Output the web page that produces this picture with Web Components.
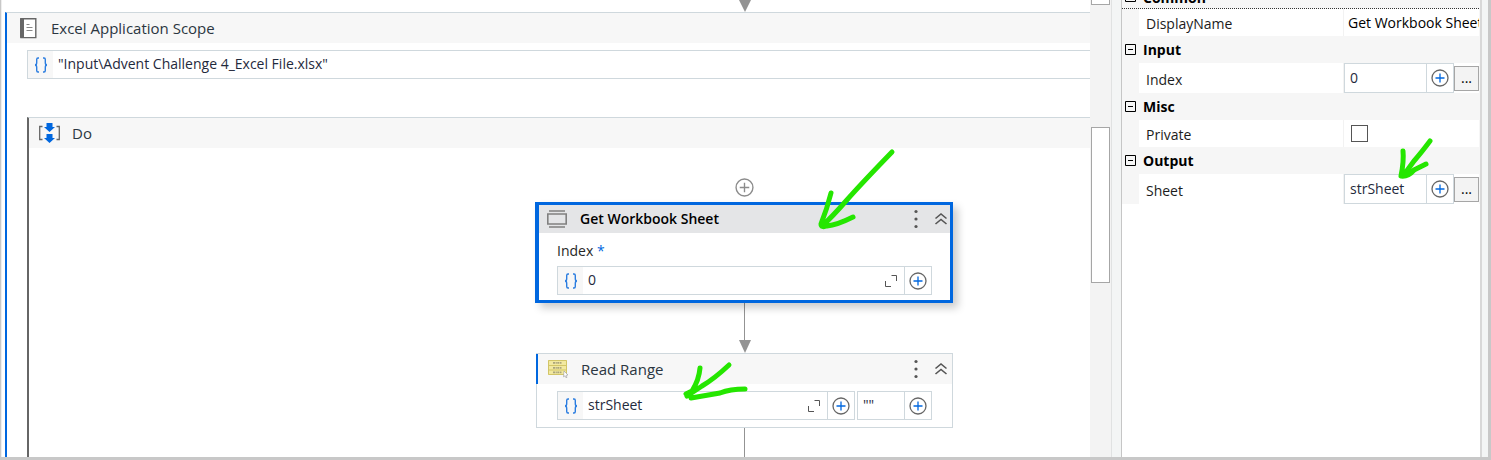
<!DOCTYPE html>
<html lang="en">
<head>
<meta charset="utf-8">
<title>Workflow designer</title>
<style>
html, body { margin: 0; height: 100%; }
body { font: 14px/20px "Open Sans", "Noto Sans", sans-serif; color: #2b3641; background: #fff; }
</style>
</head>
<body>
<studio-window>
  <workflow-canvas slot="canvas">
    <scope-activity heading="Excel Application Scope" path='"Input\Advent Challenge 4_Excel File.xlsx"'>
      <do-sequence>
        <add-activity></add-activity>
        <activity-card selected heading="Get Workbook Sheet">
          <sheet-icon slot="icon"></sheet-icon>
          <field-label>Index</field-label>
          <expression-field name="Index" value="0" braces expand></expression-field>
          <ink-arrow slot="note" kind="long"></ink-arrow>
        </activity-card>
        <flow-link arrow></flow-link>
        <activity-card heading="Read Range">
          <range-icon slot="icon"></range-icon>
          <expression-field name="Sheet name" value="strSheet" braces expand></expression-field>
          <expression-field name="Range" value='""' compact></expression-field>
          <ink-arrow slot="note" kind="wide"></ink-arrow>
        </activity-card>
        <flow-link grow></flow-link>
      </do-sequence>
    </scope-activity>
  </workflow-canvas>
  <scroll-track slot="scroll"></scroll-track>
  <property-panel slot="panel">
    <property-group heading="Common" focused><property-row name="DisplayName" value="Get Workbook Sheet" type="text"></property-row></property-group>
    <property-group heading="Input"><property-row name="Index" value="0" type="expression"></property-row></property-group>
    <property-group heading="Misc"><property-row name="Private" type="check"></property-row></property-group>
    <property-group heading="Output"><property-row name="Sheet" value="strSheet" type="expression"><ink-arrow slot="note" kind="small"></ink-arrow></property-row></property-group>
  </property-panel>
</studio-window>
<script>
const define = (name, render) => customElements.define(name, class extends HTMLElement {
  connectedCallback() {
    if (this.shadowRoot) return;
    this.attachShadow({ mode: 'open' }).innerHTML =
      '<style>*{box-sizing:border-box}svg{display:block}button{font:inherit;margin:0;padding:0;border:0;background:none;color:inherit}input{font:inherit;margin:0}</style>' + render(this);
  }
});
const attr = (el, name) => (el.getAttribute(name) || '').replace(/&/g, '&amp;').replace(/"/g, '&quot;');
const plus = (size, ring, cross) => `<svg width="${size}" height="${size}" viewBox="0 0 18 18" fill="none"><circle cx="9" cy="9" r="8" stroke="${ring}" stroke-width="1.3"/><path d="M4.5 9h9M9 4.5v9" stroke="${cross}" stroke-width="1.3"/></svg>`;

define('studio-window', () => `<style>
  :host{display:grid;box-sizing:border-box;height:100vh;grid-template-columns:minmax(0,1fr) 21px 11px minmax(358px,24%) 8px;
    border:solid #c8c8c8;border-width:0 3px 3px 1px;overflow:hidden}
  ::slotted(*){min-width:0;min-height:0}
  .gap{background:#f3f5f5;border-left:1px solid #e0e2e2;border-right:1px solid #c6c6c6}
  .edge{background:#f3f5f5;border-left:2px solid #d8d8d8}
  </style><slot name="canvas"></slot><slot name="scroll"></slot><div class="gap"></div><slot name="panel"></slot><div class="edge"></div>`);

define('workflow-canvas', () => `<style>
  :host{display:flex;flex-direction:column;overflow:hidden;border-left:1px solid #eee;padding-left:3px}
  .tip{display:grid;grid-template-columns:minmax(0,531fr) 417px minmax(0,137fr);height:12px;flex:none}
  .tip svg{grid-column:2;justify-self:center}
  ::slotted(*){flex:1}
  </style><div class="tip"><svg width="12" height="12" viewBox="0 0 12 12" fill="#939393"><path d="M0 0h12L6 12z"/></svg></div><slot></slot>`);

define('scope-activity', el => `<style>
  :host{display:flex;flex-direction:column;border-left:2px solid #0067df;border-top:1px solid #cfd8dd;min-height:0}
  header{display:flex;align-items:center;gap:14px;height:30px;padding-left:13px;background:#f7f7f7;flex:none;font-size:15px}
  .path{margin:7px 0 38px 20px;flex:none}
  ::slotted(*){margin-left:20px;flex:1}
  </style><header>
  <svg width="17" height="21" viewBox="0 0 17 21"><path d="M1 .8h14.8v18.8H1z" fill="#fff" stroke="#666" stroke-width="1.4"/><path d="M0 1Q0 0 1 0h3v20H1q-1 0-1-1z" fill="#666"/><path d="M6.500 6.500h3M6.500 9.500h6M6.500 12.500h6" stroke="#888"/></svg>
  <span>${attr(el, 'heading')}</span></header>
  <div class="path"><expression-field open name="Workbook path" braces value="${attr(el, 'path')}"></expression-field></div><slot></slot>`);

define('do-sequence', () => `<style>
  :host{display:flex;flex-direction:column;border-left:2px solid #666;border-top:1px solid #cfd8dd;min-height:0}
  header{display:flex;align-items:center;gap:12px;height:30px;padding-left:10px;background:#f7f7f7;flex:none;font-size:15px}
  .body{flex:1;display:grid;grid-template-columns:minmax(0,507fr) 417px minmax(0,137fr);min-height:0;padding-top:30px}
  .col{grid-column:2;display:flex;flex-direction:column}
  </style><header>
  <svg width="21" height="20" viewBox="0 0 21 20"><path d="M3.500 3.500H.700V16.500h2.800M17.500 3.500h2.800V16.500h-2.800" fill="none" stroke="#666" stroke-width="1.300"/><path d="M7.500 0h6v4h2.500l-5.500 5L5 4h2.500zM7.500 11h6v4h2.500l-5.500 5L5 15h2.500z" fill="#0067df"/></svg>
  <span>Do</span></header><div class="body"><div class="col"><slot></slot></div></div>`);

define('add-activity', () => `<style>:host{display:flex;justify-content:center;padding-bottom:5px}button{width:20px}</style>
  <button aria-label="Add activity">${plus(19, '#8c8c8c', '#8c8c8c')}</button>`);

define('flow-link', el => `<style>
  :host{display:flex;flex-direction:column;align-items:center;height:50px;${el.hasAttribute('grow') ? 'flex:1;' : ''}}
  i{width:1px;flex:1;background:#939393}
  </style><i></i>${el.hasAttribute('arrow') ? '<svg width="12" height="13" viewBox="0 0 12 13" fill="#939393"><path d="M0 0h12L6 13z"/></svg>' : ''}`);

define('activity-card', el => {
  const on = el.hasAttribute('selected');
  return `<style>
  :host{display:block;box-sizing:border-box;position:relative;flex:none;background:#fff;
    ${on ? 'border:3px solid #0067df;border-left-width:4px;margin-left:-1px;box-shadow:5px 5px 8px #0003' : 'border:1px solid #cfd8dd'}}
  header{display:flex;align-items:center;height:${on ? 28 : 30}px;padding:0 ${on ? 2 : 4}px 0 ${on ? 8 : 10}px;
    background:${on ? '#e4e5e7' : '#f7f7f7'};color:${on ? '#000' : '#2b3641'};
    ${on ? 'font-weight:600' : 'font-size:15px;border-left:2px solid #0067df;margin-left:-1px'}}
  .title{flex:1;margin-left:13px}
  .more{width:16px}.fold{width:14px;margin-left:10px}
  .body{display:flex;flex-wrap:wrap;column-gap:2px;padding:${on ? '8px 18px 5px' : '7px 20px'}}
  </style><header><slot name="icon"></slot><span class="title">${attr(el, 'heading')}</span>
  <button class="more" aria-label="More options"><svg width="16" height="20" viewBox="0 0 16 20" fill="#555"><circle cx="8" cy="2.500" r="1.600"/><circle cx="8" cy="10" r="1.600"/><circle cx="8" cy="17.500" r="1.600"/></svg></button>
  <button class="fold" aria-label="Collapse"><svg width="14" height="14" viewBox="0 0 14 14" fill="none" stroke="#555" stroke-width="1.600"><path d="M1.500 6.500 7 2l5.500 4.500M1.500 12 7 7.500l5.500 4.500"/></svg></button></header>
  <div class="body"><slot></slot></div><slot name="note"></slot>`;
});

define('sheet-icon', () => `<style>:host{display:block}</style><svg width="20" height="18" viewBox="0 0 20 18" fill="none" stroke="#808080" stroke-width="1.600"><path d="M2 1h16M2 17h16M.800 4h18.400v10H.800z"/></svg>`);

define('range-icon', () => `<style>:host{display:block}</style><svg width="20" height="18" viewBox="0 0 20 18"><path d="M0 0h19v15H0z" fill="#f2e9a0"/><path d="M.5.500h18v14H.500zM0 5.500h19M0 10h19" fill="none" stroke="#d2c567"/><path d="M5 2.800h9M5 7.800h9M5 12.300h9" stroke="#aaa47c" stroke-width="1.800" stroke-dasharray="2 .6 1.200 .5"/><path d="m16 11 4 4-2 .3 1 2-1 .5-1-2-1.500 1z" fill="#fff" stroke="#999" stroke-width=".600"/></svg>`);

define('field-label', () => `<style>:host{display:block;width:100%;height:25px;color:#262626}b{font-weight:400;color:#0067df}</style><slot></slot> <b>*</b>`);

define('expression-field', el => {
  const has = n => el.hasAttribute(n), open = has('open'), panel = has('panel');
  return `<style>
  :host{display:flex;box-sizing:border-box;min-width:0;height:${panel ? 30 : 29}px;flex:${has('compact') ? '0 0 75px' : '1 1 0'};
    border:1px solid #cfd8dd;${open ? 'border-right:0;' : ''}background:#fff;color:#1f2a3d}
  label{flex:none;width:25px;display:grid;place-items:center;background:#f7f7f7}
  input{flex:1;min-width:0;width:0;border:0;outline:0;padding:0 0 1px 5px;background:none;color:inherit}
  .expand{flex:none;width:26px;display:grid;place-items:center}
  .plus{flex:none;width:27px;display:grid;place-items:center;border-left:1px solid #cfd8dd}
  </style>${has('braces') ? `<label for="v" aria-label="${attr(el, 'name')}"><svg width="14" height="16" viewBox="0 0 14 16" fill="none" stroke="#2b7de0" stroke-width="1.400"><path d="M5 1H4Q2.700 1 2.700 2.500v3Q2.700 8 1 8q1.700 0 1.700 2.500v3Q2.700 15 4 15h1M9 1h1q1.300 0 1.300 1.500v3Q11.300 8 13 8q-1.700 0-1.700 2.500v3Q11.300 15 10 15H9"/></svg></label>` : ''}
  <input id="v" aria-label="${attr(el, 'name')}" value="${attr(el, 'value')}">
  ${has('expand') ? '<button class="expand" aria-label="Open editor"><svg width="12" height="12" viewBox="0 0 12 12" fill="none" stroke="#555"><path d="M.500 6v5.500H6M6.500.500h5V6"/></svg></button>' : ''}
  ${open ? '' : `<button class="plus" aria-label="Insert">${plus(18, '#666', '#0067df')}</button>`}`;
});

define('scroll-track', () => `<style>
  :host{display:flex;flex-direction:column;gap:122px;background:#f3f3f3;padding:0 1px}
  i{display:block;height:156px;background:#fff;border:1px solid #a6a6a6;flex:none}
  .up{height:5px;border-top:0}
  </style><i class="up"></i><i></i>`);

define('property-panel', () => `<style>:host{display:flex;flex-direction:column;justify-content:flex-start;overflow:hidden}div{margin-top:-18px}</style><div><slot></slot></div>`);

define('property-group', el => `<style>
  :host{display:block;background:#f6f6f6;padding-right:1px}
  header{display:flex;align-items:center;gap:7px;height:27px;padding:0 0 0 3px;color:#000;font-weight:700;${el.hasAttribute('focused') ? 'align-items:flex-end;border-bottom:1px dotted #333' : ''}}
  button{flex:none;width:11px;${el.hasAttribute('focused') ? 'padding-bottom:6px' : ''}}
  ::slotted(*){margin-left:17px}
  </style><header><button aria-label="Collapse"><svg width="11" height="11" viewBox="0 0 11 11" fill="none" stroke="#000"><path d="M.500.500h10v10H.500zM3 5.500h5"/></svg></button><span>${attr(el, 'heading')}</span></header><slot></slot>`);

define('property-row', el => {
  const t = attr(el, 'type'), n = attr(el, 'name'), v = attr(el, 'value');
  const cell = t === 'text' ? `<input class="text" id="p" value="${v}">`
    : t === 'check' ? '<input class="check" id="p" type="checkbox">'
    : `<expression-field panel name="${n}" value="${v}"></expression-field><button class="dots" aria-label="Edit">...</button>`;
  return `<style>
  :host{display:grid;position:relative;grid-template-columns:minmax(0,204fr) minmax(0,136fr);background:#fff;color:#1c1c1c;height:${t === 'expression' ? 30 : 27}px}
  label{padding:3px 0 0 7px;align-self:center}
  .cell{display:flex;align-items:center;min-width:0;border-left:1px solid #f2f2f2}
  .text{border:0;outline:0;padding:0 0 0 4px;min-width:0;width:100%;color:#000;background:none}
  .check{appearance:none;width:17px;height:17px;border:1px solid #555;background:#fff;margin-left:7px}
  .dots{width:25px;height:25px;border:1px solid #a6a6a6;background:#f3f3f3;flex:none;color:#000}
  </style><label for="p">${n}</label><div class="cell">${cell}</div><slot name="note"></slot>`;
});

/* Hand-drawn pointers laid over the activity or row they belong to. */
const INK = {
  long: ['top:-60px;left:276px', 84, 88, 'M77 7Q45 40 31 56T8 80M16 48Q12 64 6 79Q6 83 12 81Q22 80 38 72'],
  wide: ['top:5px;left:143px', 70, 46, 'M49 6Q34 20 22 27L7 37M20 9Q19 21 12 32L6 35M11 39L40 34Q50 30 65 30'],
  small: ['top:-39px;left:255px', 44, 48, 'M36 6Q27 18 20 26L9 41M9 16Q10 26 7 41Q14 42 20 35L32 29']
};
define('ink-arrow', el => {
  const [pos, w, h, d] = INK[attr(el, 'kind')];
  return `<style>:host{display:block;position:absolute;${pos};pointer-events:none;z-index:2}</style>
  <svg width="${w}" height="${h}" viewBox="0 0 ${w} ${h}" fill="none" stroke="#25e600" stroke-width="5" stroke-linecap="round" stroke-linejoin="round"><path d="${d}"/></svg>`;
});
</script>
</body>
</html>
